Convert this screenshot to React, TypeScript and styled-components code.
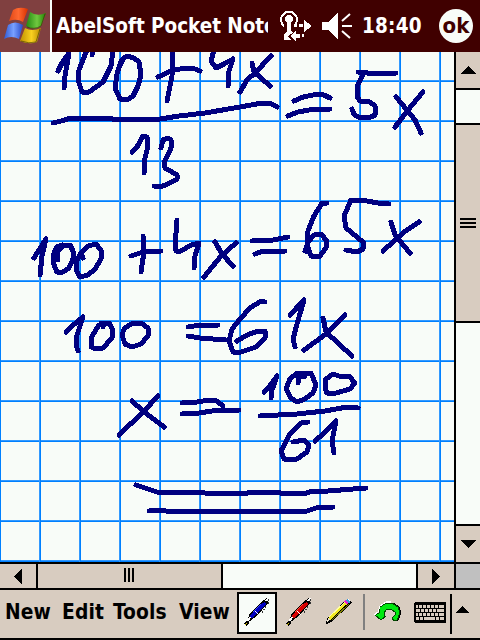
import React from "react";
import styled, { createGlobalStyle } from "styled-components";

const INK = "#000080";
const TAN = "#d8ccc0";
const PAPER = "#f8fcf8";

const GlobalStyle = createGlobalStyle`
  html, body { margin: 0; padding: 0; background: #000; }
  svg { display: block; flex: none; }
`;

const Screen = styled.div`
  width: 480px;
  height: 640px;
  display: grid;
  grid-template-rows: 52px 510px 28px 50px;
  overflow: hidden;
  background: #000;
  font-family: "DejaVu Sans Condensed", "DejaVu Sans", sans-serif;
  font-stretch: condensed;
  font-weight: bold;
`;

const TitleBar = styled.header`
  display: flex;
  align-items: center;
  background: #400000;
  color: #fff;
  font-size: 20.5px;
  white-space: nowrap;
`;

const StartButton = styled.div`
  width: 50px;
  height: 52px;
  flex: none;
  background: #804040;
  border-right: 2px solid #f8fcf8;
`;

const Title = styled.div`
  width: 212px;
  margin-left: 4px;
  overflow: hidden;
  line-height: 30px;
  letter-spacing: -0.05px;
`;

const StatusArea = styled.div`
  display: flex;
  align-items: center;
  height: 52px;
`;

const Clock = styled.div`
  width: 77px;
  line-height: 30px;
  letter-spacing: 0.2px;
`;

const OkButton = styled.div`
  width: 34px;
  height: 34px;
  border-radius: 50%;
  background: ${PAPER};
  color: #400000;
  font-size: 22px;
  line-height: 33px;
  text-align: center;
`;

const Workspace = styled.main`
  display: grid;
  grid-template-columns: 454px 26px;
`;

const Paper = styled.div`
  background-color: ${PAPER};
  background-image:
    linear-gradient(to right, #0080ff 1px, transparent 1px, transparent 39px, #3399ff 39px),
    linear-gradient(to bottom, #3399ff 1px, #0080ff 1px, #0080ff 2px, transparent 2px);
  background-size: 40px 40px;
  background-position: 0 0, 0 28px;
`;

const VScroll = styled.div`
  display: grid;
  grid-template-rows: 36px 2px 33px 2px 196px 2px 201px 2px 36px;
  border-left: 2px solid #000;
  background: #000;
`;

const HScroll = styled.div`
  display: grid;
  grid-template-columns: 36px 2px 183px 2px 193px 2px 36px 2px 24px;
  border-top: 2px solid #000;
  border-bottom: 2px solid #000;
  height: 24px;
  background: #000;
`;

const Cell = styled.div<{ $tone?: string }>`
  display: flex;
  justify-content: center;
  overflow: hidden;
  background: ${(p) => p.$tone ?? TAN};
`;

const Toolbar = styled.footer`
  display: flex;
  align-items: flex-start;
  height: 48px;
  border-bottom: 2px solid #000;
  background: ${TAN};
`;

const Menu = styled.nav`
  display: grid;
  grid-template-columns: 57px 51px 66px 58px;
  padding-left: 5px;
  font-size: 20.8px;
  line-height: 44px;
  letter-spacing: 0.1px;
  white-space: nowrap;
`;

const Tool = styled.div<{ $active?: boolean }>`
  width: 36px;
  height: 38px;
  margin-top: 2px;
  border: 2px solid ${(p) => (p.$active ? "#000" : "transparent")};
  background: ${(p) => (p.$active ? PAPER : "transparent")};
`;

const Rule = styled.div<{ $color: string; $h: number; $ml: number }>`
  width: 2px;
  height: ${(p) => p.$h}px;
  margin: 4px 0 0 ${(p) => p.$ml}px;
  background: ${(p) => p.$color};
`;

const Gap = styled.div<{ $w: number }>`
  flex: none;
  width: ${(p) => p.$w}px;
`;

/* Ink strokes, in screen coordinates; each entry is one pen movement. */
const strokes = [
  "58,71 62,63 69,53 65,76 64,88",
  "87,50 79,70 78,80 82,92 89,92 103,82 111,66 113,50",
  "93,50 92,55",
  "120,65 123,59 127,56 134,58 139,62 141,75 138,86 133,96 127,100 120,99 115,88 117,74 121,61",
  "173,50 172,76 167,101",
  "158,77 173,70 187,68 195,69 200,71",
  "214,50 211,61 216,68 224,64 233,59 228,74 228,86",
  "271,56 255,73 247,80 240,92",
  "252,63 254,72 261,78 270,86",
  "53,123 61,121 71,118 111,118 112,119 160,119 179,116 205,113 240,107 262,103 270,103 277,107",
  "132,152 137,147 143,136 147,137 147,150 144,162 144,173",
  "161,148 163,140 168,138 171,140 171,148 164,163 165,168 172,172 177,175 177,179 168,184 163,186 154,186",
  "294,101 303,97 318,94 324,95 330,98",
  "288,116 298,112 309,110 318,109 330,109",
  "358,72 365,72 370,74 396,73",
  "363,74 357,87 357,97 360,101 370,102 375,106 375,115 371,117 358,117 354,114 352,109",
  "423,92 408,110 395,127",
  "396,97 407,110 415,120 421,133",
  "34,258 39,250 46,239 42,256 40,275",
  "58,260 57,252 64,245 70,245 73,251 73,259 69,268 63,272 57,272 53,262 54,253 57,247 62,245",
  "83,258 81,253 88,246 96,244 101,250 101,259 95,269 88,275 80,277 76,270 76,262 81,253",
  "143,236 144,252 141,272",
  "131,256 143,252 161,251",
  "177,220 175,247 176,251 181,251 191,245 199,243 195,256 194,268",
  "236,243 221,256 204,277",
  "215,242 222,254 233,266",
  "252,241 273,240 288,237",
  "255,254 263,251 285,251",
  "327,203 322,203 314,216 308,231 307,245 311,256 319,257 326,248 327,241 321,234 314,235 308,242 305,251 308,252",
  "389,204 378,203 367,201 351,200 344,216 346,228 357,237 364,243 363,249 357,252 346,250",
  "419,222 404,232 383,251",
  "391,222 395,235 410,253",
  "66,332 72,326 83,317 77,335 76,345 78,351",
  "103,327 103,324 99,325 92,336 91,347 96,349 103,348 112,338 112,328 109,323 101,323",
  "125,328 131,324 141,323 148,328 148,336 141,344 132,347 125,344 122,335 124,329",
  "188,327 200,325 218,325",
  "188,336 200,338 226,340",
  "265,302 261,301 250,308 240,319 232,329 229,341 233,352 241,352 256,347 265,338 265,331 258,331 247,335 237,341",
  "290,315 304,300 297,324 293,339 295,347",
  "345,315 326,334 304,350",
  "323,318 326,332 352,356",
  "158,396 143,412 119,435",
  "132,401 143,411 164,427",
  "182,403 197,402 209,400 217,401 223,406",
  "182,414 199,413 219,410 239,410",
  "264,392 269,387 277,376 272,390 271,398",
  "298,383 298,375 304,377 306,373 311,373 316,385 313,393 305,399 297,402 291,398 286,389 290,379 297,373 306,373",
  "326,379 333,374 339,376 349,376 355,383 350,389 336,393 327,393 325,388 326,379",
  "260,416 297,414 325,411 347,407 354,407 358,408",
  "308,422 301,423 290,434 281,451 284,459 297,459 307,452 309,445 304,440 293,442",
  "315,441 324,433 336,421 332,441 334,453",
  "136,485 157,492 201,492 205,493 248,493 250,492 278,492 280,493 307,493 309,492 328,491 366,488",
  "149,511 162,510 166,511 307,511 316,508 333,507",
];

const Handwriting = () => (
  <svg width="454" height="510" viewBox="0 52 454 510" shapeRendering="crispEdges">
    <g fill="none" stroke={INK} strokeWidth="5" strokeLinecap="round" strokeLinejoin="round">
      {strokes.map((points) => (
        <polyline key={points} points={points} />
      ))}
    </g>
  </svg>
);

const WindowsFlag = () => (
  <svg width="50" height="52" viewBox="0 0 50 52">
    <defs>
      <linearGradient id="red"><stop stopColor="#e04818" /><stop offset=".5" stopColor="#ff6830" /><stop offset="1" stopColor="#d83000" /></linearGradient>
      <linearGradient id="green"><stop stopColor="#208810" /><stop offset=".55" stopColor="#70c840" /><stop offset="1" stopColor="#208000" /></linearGradient>
      <linearGradient id="blue"><stop stopColor="#3058d0" /><stop offset=".5" stopColor="#78a0ff" /><stop offset="1" stopColor="#2848c8" /></linearGradient>
      <linearGradient id="yellow"><stop stopColor="#c09000" /><stop offset=".55" stopColor="#f8d020" /><stop offset="1" stopColor="#b88800" /></linearGradient>
    </defs>
    <path d="M13 10Q19 6 28 9L23 22Q17 18 9 21Z" fill="url(#red)" />
    <path d="M30 12Q37 17 46 13L41 26Q34 31 26 26Z" fill="url(#green)" />
    <path d="M8 25Q15 20 23 25L19 39Q11 35 4 39Z" fill="url(#blue)" />
    <path d="M25 28Q32 32 41 28L37 42Q29 45 20 41Z" fill="url(#yellow)" />
    <path d="M45 14L41 26Q34 30 27 27M40 29L36 42Q29 44 21 41" fill="none" stroke="#383800" strokeOpacity=".6" />
  </svg>
);

const ConnectionIcon = () => (
  <svg width="34" height="52" viewBox="278 0 34 52" shapeRendering="crispEdges">
    <path d="M284 26A8 8 0 1 1 294 26" fill="none" stroke="#fff" strokeWidth="2" />
    <circle cx="289" cy="19" r="4" fill="#fff" />
    <path d="M287 21H291V31L293 33L288 36L291 40H284V34L287 31Z" fill="#fff" />
    <path d="M295 24H297V27H295ZM299 24H303V27H299ZM304 20L312 26L304 32ZM290 36L296 30V34H300V38H296V42ZM302 34H304V37H302Z" fill="#fff" />
  </svg>
);

const SpeakerIcon = () => (
  <svg width="34" height="52" viewBox="321 0 34 52">
    <path d="M322 22H328L338 13V39L328 30H322Z" fill="#fff" shapeRendering="crispEdges" />
    <path d="M342 21L350 14M342 26H352M342 31L350 38" stroke="#fff" strokeWidth="2" fill="none" />
  </svg>
);

const Arrow = ({ d, box }: { d: string; box: string }) => {
  const [, , w, h] = box.split(" ");
  return (
    <svg width={w} height={h} viewBox={box} shapeRendering="crispEdges">
      <path d={d} fill="#000" />
    </svg>
  );
};

const PenIcon = ({ color, light }: { color: string; light: string }) => (
  <svg width="36" height="38" viewBox="239 594 36 38" shapeRendering="crispEdges">
    <path d="M246 623L250 613L261 602L267 598L268 603L257 616L250 621Z" fill="#000" />
    <path d="M250 615L262 603L265 602L266 604L254 617L251 618Z" fill={color} />
    <path d="M253 612L261 604" stroke={light} strokeWidth="1" />
    <path d="M255 611L259 615" stroke="#fff" strokeWidth="1" />
    <path d="M266 601L268 598" stroke="#fff" strokeWidth="1.5" />
    <path d="M268 599V604M266 606L262 613" stroke="#333" strokeWidth="1" strokeDasharray="2 1" fill="none" />
    <path d="M250 617L247 622" stroke="#fff" strokeWidth="2" />
    <path d="M245 625L248 622" stroke="#000" strokeWidth="3" />
    <path d="M245 625L247 623" stroke="#d8c800" strokeWidth="1.4" />
  </svg>
);

const PencilIcon = () => (
  <svg width="36" height="38" viewBox="323 594 36 38" shapeRendering="crispEdges">
    <path d="M328 624L329 618L348 600L350 599L354 602L353 604L333 622Z" fill="#000" />
    <path d="M331.500 618.500L348.500 602.500" stroke="#f0e820" strokeWidth="3" />
    <path d="M331 617L347 602" stroke="#ffffa0" strokeWidth="1" />
    <path d="M334 620L351 604" stroke="#808000" strokeWidth="1" />
    <path d="M347 601L350 604" stroke="#f020d0" strokeWidth="2" />
    <path d="M349 600L352 603" stroke="#3898d8" strokeWidth="2" />
    <path d="M350 599L352 601" stroke="#fff" strokeWidth="1" />
    <path d="M330 618L329 622L332 620Z" fill="#e8e0d0" />
    <path d="M328 622H330V624H328Z" fill="#000" />
  </svg>
);

const UndoIcon = () => (
  <svg width="32" height="46" viewBox="372 590 32 46" shapeRendering="crispEdges">
    <path d="M380 608L386 603H393L399 607L401 613L398 620L394 621" stroke="#000" strokeWidth="1" fill="none" />
    <path d="M375 615L379 613L380 607L386 603H392L398 607L400 613L397 620L394 621L392 618L395 615V612L391 609H387L384 613V616H386L381 620Z" fill="#00e810" stroke="#004800" strokeWidth="1" />
    <path d="M374 615L378 612L380 606L386 602H391" stroke="#fff" strokeWidth="1.2" fill="none" />
  </svg>
);

const keyRows = [
  [605, 419, 6],
  [609, 421, 5],
  [613, 419, 6],
];

const KeyboardIcon = () => (
  <svg width="32" height="46" viewBox="414 590 32 46" shapeRendering="crispEdges">
    <path d="M415 602H445L446 603V622L445 623H415L414 622V603Z" fill="#000" />
    {keyRows.map(([y, x, n]) => (
      <g key={y} fill={TAN}>
        <rect x="416" y={y} width={x - 417} height="3" />
        {Array.from({ length: n - 1 }, (_, i) => (
          <rect key={i} x={x + i * 4} y={y} width="3" height="3" />
        ))}
        <rect x={x + (n - 1) * 4} y={y} width={444 - x - (n - 1) * 4} height="3" />
      </g>
    ))}
    <path d="M416 617H419V620H416ZM420 617H423V620H420ZM424 617H435V620H424ZM436 617H439V620H436ZM440 617H444V620H440Z" fill={TAN} />
  </svg>
);

export default function App() {
  return (
    <>
      <GlobalStyle />
      <Screen>
        <TitleBar>
          <StartButton><WindowsFlag /></StartButton>
          <Title>AbelSoft Pocket Notes</Title>
          <StatusArea>
            <Gap $w={10} />
            <ConnectionIcon />
            <Gap $w={9} />
            <SpeakerIcon />
            <Gap $w={7} />
            <Clock>18:40</Clock>
            <OkButton>ok</OkButton>
          </StatusArea>
        </TitleBar>

        <Workspace>
          <Paper><Handwriting /></Paper>
          <VScroll>
            <Cell><Arrow box="456 52 24 36" d="M468 66L476 74H461Z" /></Cell>
            <span />
            <Cell $tone={PAPER} />
            <span />
            <Cell><Arrow box="456 125 24 196" d="M460 218H476V220H460ZM460 222H476V224H460ZM460 226H476V228H460Z" /></Cell>
            <span />
            <Cell $tone={PAPER} />
            <span />
            <Cell><Arrow box="456 526 24 36" d="M461 540H476L468.5 548Z" /></Cell>
          </VScroll>
        </Workspace>

        <HScroll>
          <Cell><Arrow box="0 564 36 24" d="M22 569V584L14 576.5Z" /></Cell>
          <span />
          <Cell><Arrow box="38 564 183 24" d="M124 568H126V582H124ZM128 568H130V582H128ZM132 568H134V582H132Z" /></Cell>
          <span />
          <Cell $tone={PAPER} />
          <span />
          <Cell><Arrow box="418 564 36 24" d="M432 569V584L440 576.5Z" /></Cell>
          <span />
          <Cell $tone="#c0c0c0" />
        </HScroll>

        <Toolbar>
          <Menu>
            <span>New</span>
            <span>Edit</span>
            <span>Tools</span>
            <span>View</span>
          </Menu>
          <Tool $active><PenIcon color="#0000c0" light="#4048ff" /></Tool>
          <Gap $w={2} />
          <Tool><PenIcon color="#d80000" light="#ff5040" /></Tool>
          <Tool><PencilIcon /></Tool>
          <Rule $color="#808080" $h={36} $ml={4} />
          <Gap $w={7} />
          <UndoIcon />
          <Gap $w={10} />
          <KeyboardIcon />
          <Rule $color="#000" $h={40} $ml={4} />
          <Arrow box="452 590 24 46" d="M462 606L469 613H456Z" />
        </Toolbar>
      </Screen>
    </>
  );
}
